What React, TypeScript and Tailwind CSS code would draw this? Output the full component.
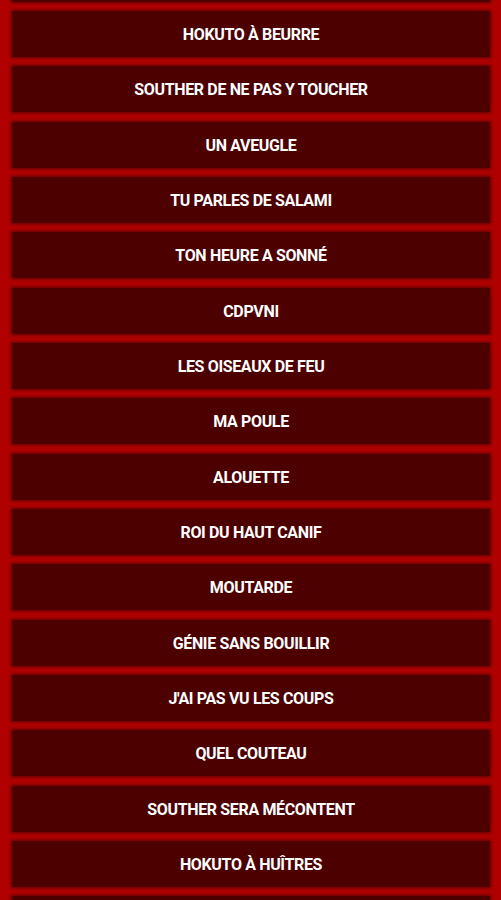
const items = [
  "",
  "HOKUTO À BEURRE",
  "SOUTHER DE NE PAS Y TOUCHER",
  "UN AVEUGLE",
  "TU PARLES DE SALAMI",
  "TON HEURE A SONNÉ",
  "CDPVNI",
  "LES OISEAUX DE FEU",
  "MA POULE",
  "ALOUETTE",
  "ROI DU HAUT CANIF",
  "MOUTARDE",
  "GÉNIE SANS BOUILLIR",
  "J'AI PAS VU LES COUPS",
  "QUEL COUTEAU",
  "SOUTHER SERA MÉCONTENT",
  "HOKUTO À HUÎTRES",
  "",
];

export default function App() {
  return (
    <div className="h-[900px] w-[501px] overflow-hidden bg-[#b00000]">
      <div className="mt-[-44.33px] flex flex-col gap-[9.33px] pl-[12px] pr-[11px]">
        {items.map((label, i) => (
          <button
            key={i}
            className="flex h-[46px] shrink-0 items-center justify-center bg-[#4c0000] pt-[2px] text-[16px] font-bold tracking-[-0.35px] text-white shadow-[0_0_3px_1px_rgba(40,0,0,0.6)]"
            style={{ fontFamily: "Roboto, 'Liberation Sans', sans-serif" }}
          >
            {label}
          </button>
        ))}
      </div>
    </div>
  );
}
